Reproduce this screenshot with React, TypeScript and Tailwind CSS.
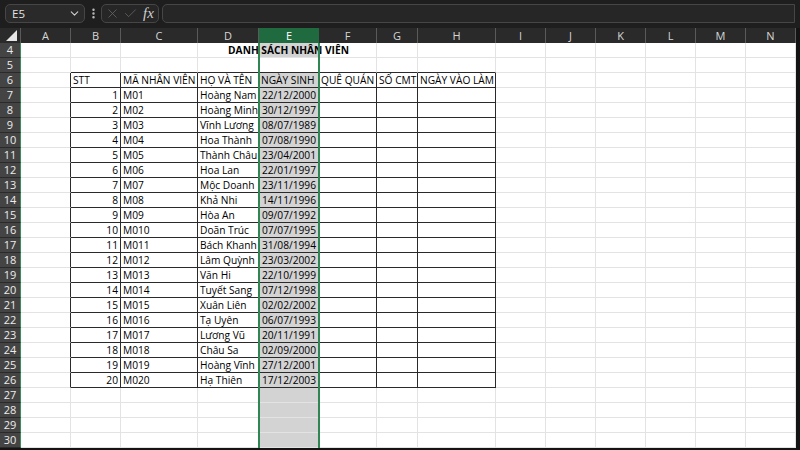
import { ChevronDown, EllipsisVertical, X, Check } from 'lucide-react';

const COLS = ['A', 'B', 'C', 'D', 'E', 'F', 'G', 'H', 'I', 'J', 'K', 'L', 'M', 'N'];
const GRID = 'grid grid-cols-[21px_50px_50px_77px_61px_60px_58px_41px_78px_50px_50px_50px_50px_50px_50px]';

const employees: [string, string, string][] = [
  ['M01', 'Hoàng Nam', '22/12/2000'],
  ['M02', 'Hoàng Minh', '30/12/1997'],
  ['M03', 'Vĩnh Lương', '08/07/1989'],
  ['M04', 'Hoa Thành', '07/08/1990'],
  ['M05', 'Thành Châu', '23/04/2001'],
  ['M06', 'Hoa Lan', '22/01/1997'],
  ['M07', 'Mộc Doanh', '23/11/1996'],
  ['M08', 'Khả Nhi', '14/11/1996'],
  ['M09', 'Hòa An', '09/07/1992'],
  ['M010', 'Doãn Trúc', '07/07/1995'],
  ['M011', 'Bách Khanh', '31/08/1994'],
  ['M012', 'Lâm Quỳnh', '23/03/2002'],
  ['M013', 'Văn Hi', '22/10/1999'],
  ['M014', 'Tuyết Sang', '07/12/1998'],
  ['M015', 'Xuân Liên', '02/02/2002'],
  ['M016', 'Tạ Uyên', '06/07/1993'],
  ['M017', 'Lương Vũ', '20/11/1991'],
  ['M018', 'Châu Sa', '02/09/2000'],
  ['M019', 'Hoàng Vĩnh', '27/12/2001'],
  ['M020', 'Hạ Thiên', '17/12/2003'],
];

const headers = ['STT', 'MÃ NHÂN VIÊN', 'HỌ VÀ TÊN', 'NGÀY SINH', 'QUÊ QUÁN', 'SỐ CMT', 'NGÀY VÀO LÀM'];

function cellValue(row: number, col: number): { text: string; right?: boolean } {
  if (row === 6 && col >= 1 && col <= 7) return { text: headers[col - 1] };
  if (row >= 7 && row <= 26) {
    const i = row - 7;
    const e = employees[i];
    if (col === 1) return { text: String(i + 1), right: true };
    if (col === 2) return { text: e[0] };
    if (col === 3) return { text: e[1] };
    if (col === 4) return { text: e[2], right: true };
  }
  return { text: '' };
}

function Cell({ row, col }: { row: number; col: number }) {
  const inTable = row >= 6 && row <= 26 && col >= 1 && col <= 7;
  const blackRight = inTable || (col === 0 && row >= 6 && row <= 26);
  const blackBottom = inTable || (row === 5 && col >= 1 && col <= 7);
  const selected = col === 4 && row !== 5;
  const { text, right } = cellValue(row, col);

  return (
    <div
      className={[
        'h-[15px] overflow-hidden whitespace-nowrap px-[2px] text-[10.2px] leading-[14px] text-black border-r border-b',
        blackRight ? 'border-r-[#2a2a2a]' : 'border-r-[#e3e3e3]',
        blackBottom ? 'border-b-[#2a2a2a]' : 'border-b-[#e3e3e3]',
        selected ? 'bg-[#d3d3d3]' : 'bg-white',
        right ? 'text-right' : 'text-left',
      ].join(' ')}
    >
      {text}
    </div>
  );
}

function Row({ row }: { row: number }) {
  return (
    <div className={GRID}>
      <div className="h-[15px] border-r border-r-[#3a8d5c] border-b border-b-[#2a2a2a] bg-[#444444] text-center text-[11px] leading-[14px] text-[#ececec]">
        {row}
      </div>
      {COLS.map((c, i) =>
        row === 4 && i === 4 ? (
          <div
            key={c}
            className="relative z-10 flex h-[15px] justify-center whitespace-nowrap border-r border-b border-[#e3e3e3] bg-[#d3d3d3] text-[10.2px] font-bold leading-[14px] text-black"
          >
            <span className="px-[1px]">DANH SÁCH NHÂN VIÊN</span>
          </div>
        ) : (
          <Cell key={c} row={row} col={i} />
        )
      )}
    </div>
  );
}

function FormulaBar() {
  return (
    <div className="flex h-[28px] items-start bg-[#1e1e1e] pt-[4px] pl-[5px] pr-[5px]">
      <div className="flex h-[19px] w-[80px] items-center justify-between rounded-[5px] border border-[#464646] bg-[#2a2a2a] pl-[6px] pr-[3px] text-[11.5px] text-[#e2e2e2]">
        <span>E5</span>
        <ChevronDown size={13} strokeWidth={2} className="text-[#cfcfcf]" />
      </div>
      <div className="flex h-[19px] w-[16px] items-center justify-center">
        <EllipsisVertical size={13} strokeWidth={2.5} className="text-[#bdbdbd]" />
      </div>
      <div className="flex h-[19px] w-[58px] items-center gap-[3px] rounded-[5px] border border-[#464646] bg-[#262626] px-[3px]">
        <X size={15} strokeWidth={1.2} className="text-[#6a6a6a]" />
        <Check size={15} strokeWidth={1.2} className="text-[#6a6a6a]" />
        <span className="ml-[2px] font-['Liberation_Serif',serif] text-[15px] italic leading-none text-[#d0d0d0]">fx</span>
      </div>
      <div className="ml-[3px] h-[19px] flex-1 rounded-l-[5px] border border-[#464646] bg-[#262626]" />
    </div>
  );
}

function ColumnHeader() {
  return (
    <div className={GRID}>
      <div className="relative h-[15px] border-r border-[#5a5a5a] bg-[#2a2a2a]">
        <svg className="absolute right-[3px] bottom-[2px]" width="11" height="11" viewBox="0 0 11 11">
          <polygon points="11,0 11,11 0,11" fill="#e6e6e6" />
        </svg>
      </div>
      {COLS.map((c) =>
        c === 'E' ? (
          <div key={c} className="h-[15px] bg-[#1f6b3f] text-center text-[11px] leading-[15px] text-white">
            {c}
          </div>
        ) : (
          <div key={c} className="h-[15px] border-r border-[#5a5a5a] bg-[#2a2a2a] text-center text-[11px] leading-[15px] text-[#d6d6d6]">
            {c}
          </div>
        )
      )}
    </div>
  );
}

export default function App() {
  const rows = Array.from({ length: 27 }, (_, i) => i + 4);
  return (
    <div className="h-[450px] w-[800px] overflow-hidden bg-[#141414] font-['Open_Sans',sans-serif]">
      <FormulaBar />
      <div className="w-[796px]">
        <ColumnHeader />
        <div className="relative">
          {rows.map((r) => (
            <Row key={r} row={r} />
          ))}
          <div className="pointer-events-none absolute top-0 bottom-0 left-[258px] z-20 w-[62px] border-x-2 border-[#2f8653]" />
        </div>
      </div>
    </div>
  );
}
